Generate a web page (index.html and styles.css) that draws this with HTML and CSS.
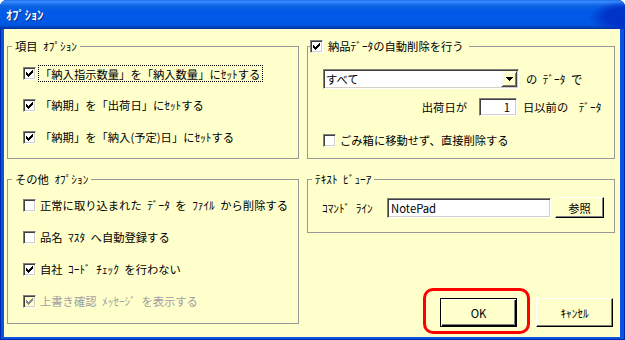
FILE: index.html
```html
<!DOCTYPE html>
<html lang="ja">
<head>
    <meta charset="UTF-8">
    <meta name="viewport" content="width=device-width, initial-scale=1.0">
    <title>オプション</title>
    <link rel="stylesheet" href="styles.css">
</head>
<body>
    <div class="window">
        <div class="titlebar">ｵﾌﾟｼｮﾝ</div>
        <div class="client">
            <!-- 項目オプション -->
            <div class="group">
                <div class="group-title">項目 ｵﾌﾟｼｮﾝ</div>
                <div class="group-body items-body">
                    <div class="check-row">
                        <span class="check"><svg width="7" height="7" viewBox="0 0 7 7"><path d="M0 2h1v3H0zM1 3h1v3H1zM2 4h1v3H2zM3 3h1v3H3zM4 2h1v3H4zM5 1h1v3H5zM6 0h1v3H6z"/></svg></span>
                        <span class="focus">「納入指示数量」を「納入数量」にｾｯﾄする</span>
                    </div>
                    <div class="check-row">
                        <span class="check"><svg width="7" height="7" viewBox="0 0 7 7"><path d="M0 2h1v3H0zM1 3h1v3H1zM2 4h1v3H2zM3 3h1v3H3zM4 2h1v3H4zM5 1h1v3H5zM6 0h1v3H6z"/></svg></span>
                        <span>「納期」を「出荷日」にｾｯﾄする</span>
                    </div>
                    <div class="check-row">
                        <span class="check"><svg width="7" height="7" viewBox="0 0 7 7"><path d="M0 2h1v3H0zM1 3h1v3H1zM2 4h1v3H2zM3 3h1v3H3zM4 2h1v3H4zM5 1h1v3H5zM6 0h1v3H6z"/></svg></span>
                        <span>「納期」を「納入(予定)日」にｾｯﾄする</span>
                    </div>
                </div>
            </div>

            <!-- 自動削除 -->
            <div class="group">
                <div class="group-title with-check">
                    <span class="check"><svg width="7" height="7" viewBox="0 0 7 7"><path d="M0 2h1v3H0zM1 3h1v3H1zM2 4h1v3H2zM3 3h1v3H3zM4 2h1v3H4zM5 1h1v3H5zM6 0h1v3H6z"/></svg></span>
                    <span>納品ﾃﾞｰﾀの自動削除を行う</span>
                </div>
                <div class="group-body delete-body">
                    <div class="delete-grid">
                        <div class="edit combo">
                            <span class="combo-text">すべて</span>
                            <span class="combo-btn"><svg width="7" height="4" viewBox="0 0 7 4"><path d="M0 0h7L3.5 4z"/></svg></span>
                        </div>
                        <span>の ﾃﾞｰﾀ で</span>
                        <div class="days">
                            <span>出荷日が</span>
                            <span class="edit num">1</span>
                        </div>
                        <span class="days-suffix">日以前の ﾃﾞｰﾀ</span>
                    </div>
                    <div class="check-row trash-row">
                        <span class="check"></span>
                        <span>ごみ箱に移動せず、直接削除する</span>
                    </div>
                </div>
            </div>

            <!-- その他オプション -->
            <div class="group other-group">
                <div class="group-title">その他 ｵﾌﾟｼｮﾝ</div>
                <div class="group-body other-body">
                    <div class="check-row">
                        <span class="check"></span>
                        <span>正常に取り込まれた ﾃﾞｰﾀ を ﾌｧｲﾙ から削除する</span>
                    </div>
                    <div class="check-row">
                        <span class="check"></span>
                        <span>品名 ﾏｽﾀ へ自動登録する</span>
                    </div>
                    <div class="check-row">
                        <span class="check"><svg width="7" height="7" viewBox="0 0 7 7"><path d="M0 2h1v3H0zM1 3h1v3H1zM2 4h1v3H2zM3 3h1v3H3zM4 2h1v3H4zM5 1h1v3H5zM6 0h1v3H6z"/></svg></span>
                        <span>自社 ｺｰﾄﾞ ﾁｪｯｸ を行わない</span>
                    </div>
                    <div class="check-row disabled">
                        <span class="check"><svg width="7" height="7" viewBox="0 0 7 7"><path d="M0 2h1v3H0zM1 3h1v3H1zM2 4h1v3H2zM3 3h1v3H3zM4 2h1v3H4zM5 1h1v3H5zM6 0h1v3H6z"/></svg></span>
                        <span>上書き確認 ﾒｯｾｰｼﾞ を表示する</span>
                    </div>
                </div>
            </div>

            <div class="side">
                <!-- テキストビューア -->
                <div class="group">
                    <div class="group-title">ﾃｷｽﾄ ﾋﾞｭｰｱ</div>
                    <div class="group-body viewer-body">
                        <span class="viewer-label">ｺﾏﾝﾄﾞ ﾗｲﾝ</span>
                        <span class="edit command">NotePad</span>
                        <button class="btn btn-small">参照</button>
                    </div>
                </div>
                <div class="actions">
                    <span class="highlight"><button class="btn btn-default">OK</button></span>
                    <button class="btn">ｷｬﾝｾﾙ</button>
                </div>
            </div>
        </div>
    </div>
</body>
</html>
```

FILE: styles.css
```css
body {
    margin: 0;
    font-family: "Noto Sans CJK JP", sans-serif;
    font-size: 11.3px;
    line-height: 14px;
    color: #000;
    word-spacing: 3px;
}
.window {
    width: 625px;
    height: 340px;
    display: flex;
    flex-direction: column;
    background: #0b52e2;
    border-radius: 7px 7px 0 0;
    box-shadow: inset 1px 0 #0029a8, inset -1px 0 #0029a8, inset 0 -1px #0029a8;
}
.titlebar {
    flex: none;
    height: 29px;
    box-sizing: border-box;
    padding: 1px 0 0 6px;
    display: flex;
    align-items: center;
    border-radius: 7px 7px 0 0;
    background:
        radial-gradient(ellipse 36px 16px at 100% 17px, #0034c8 55%, rgba(0, 52, 200, 0) 100%),
        linear-gradient(to bottom, #0a5ce6 0, #3d8eff 1px, #2a7cf6 3px, #0b62e0 6px, #005ae8 11px, #0058e6 22px, #0052dc 26px, #003fb6 27px, #0036a6 29px);
    color: #fff;
    font-size: 12.5px;
    font-weight: bold;
    text-shadow: 1px 1px #0a2a8a;
}
.client {
    flex: 1;
    margin: 0 5px 3px 4px;
    padding: 17px 5px 0 3px;
    background: #ffffcc;
    display: grid;
    grid-template-columns: 292px 308px;
    column-gap: 8px;
    row-gap: 20px;
    align-content: start;
}

/* group boxes */
.group {
    border: 1px solid #999;
}
.group-title {
    display: flex;
    align-items: center;
    width: max-content;
    height: 14px;
    margin: -8px 0 0 4px;
    padding: 0 3px;
    background: #ffffcc;
}
.group-title.with-check {
    margin-left: 2px;
    padding: 0 5px 0 0;
    gap: 5px;
}
.group-body {
    padding-left: 15px;
}
.items-body {
    padding-top: 4px;
    padding-bottom: 5px;
}
.other-group {
    align-self: start;
}
.other-body {
    padding-top: 3px;
    padding-bottom: 6px;
}
.delete-body {
    padding-top: 16px;
}
.viewer-body {
    display: flex;
    align-items: center;
    padding: 11px 0 14px 14px;
}

/* checkboxes */
.check-row {
    display: flex;
    align-items: center;
    gap: 4px;
    height: 32px;
}
.check {
    flex: none;
    width: 13px;
    height: 13px;
    box-sizing: border-box;
    display: flex;
    align-items: center;
    justify-content: center;
    background: #fff;
    border: 1px solid;
    border-color: #808080 #fff #fff #808080;
    box-shadow: inset 1px 1px #404040, inset -1px -1px #d4d0c8;
}
.check svg {
    fill: #000;
    shape-rendering: crispEdges;
}
.focus {
    margin-left: -1px;
    padding: 1px 2px 0 1px;
    outline: 1px dotted #000;
}
.disabled {
    color: #a0a0a0;
}
.disabled .check {
    background: #ffffcc;
}
.disabled .check svg {
    fill: #8c8c8c;
}

/* delete options */
.delete-grid {
    display: grid;
    grid-template-columns: 196px auto;
    grid-template-rows: 20px 18px;
    column-gap: 7px;
    row-gap: 9px;
    align-items: center;
}
.days {
    display: flex;
    align-items: center;
    justify-content: flex-end;
    gap: 12px;
    margin-right: 2px;
}
.days-suffix {
    margin-left: -3px;
    word-spacing: 8px;
}
.trash-row {
    height: 20px;
    margin-top: 14px;
}

/* edit fields */
.edit {
    box-sizing: border-box;
    height: 20px;
    display: flex;
    align-items: center;
    padding: 0 3px;
    background: #fff;
    border: 1px solid;
    border-color: #808080 #fff #fff #808080;
    box-shadow: inset 1px 1px #404040, inset -1px -1px #d4d0c8;
}
.combo {
    padding: 0 1px 0 2px;
}
.combo-text {
    flex: 1;
}
.combo-btn {
    width: 16px;
    height: 16px;
    box-sizing: border-box;
    display: flex;
    align-items: center;
    justify-content: center;
    background: #ffffcc;
    border: 1px solid;
    border-color: #ffffcc #404040 #404040 #ffffcc;
    box-shadow: inset 1px 1px #fff, inset -1px -1px #808080;
}
.combo-btn svg {
    shape-rendering: crispEdges;
}
.num {
    width: 38px;
    height: 18px;
    justify-content: flex-end;
    padding-right: 6px;
}
.viewer-label {
    width: 65px;
}
.command {
    width: 164px;
    margin-right: 4px;
}

/* buttons */
.side {
    display: flex;
    flex-direction: column;
}
.actions {
    display: flex;
    justify-content: flex-end;
    gap: 19px;
    margin-top: 65px;
    padding-right: 2px;
}
.btn {
    width: 77px;
    height: 29px;
    padding: 0;
    font: inherit;
    color: #000;
    background: #ffffcc;
    border: 1px solid;
    border-color: #fff #000 #000 #fff;
    box-shadow: inset -1px -1px #808080;
}
.btn-default {
    border-color: #000;
    box-shadow: inset 1px 1px #fff, inset -1px -1px #000, inset -2px -2px #808080;
}
.btn-small {
    width: 49px;
    height: 21px;
}
.highlight {
    position: relative;
    display: flex;
}
.highlight::after {
    content: "";
    position: absolute;
    left: -17px;
    right: -13px;
    top: -10px;
    bottom: -7px;
    border: 3px solid #f00;
    border-radius: 10px;
}
```
